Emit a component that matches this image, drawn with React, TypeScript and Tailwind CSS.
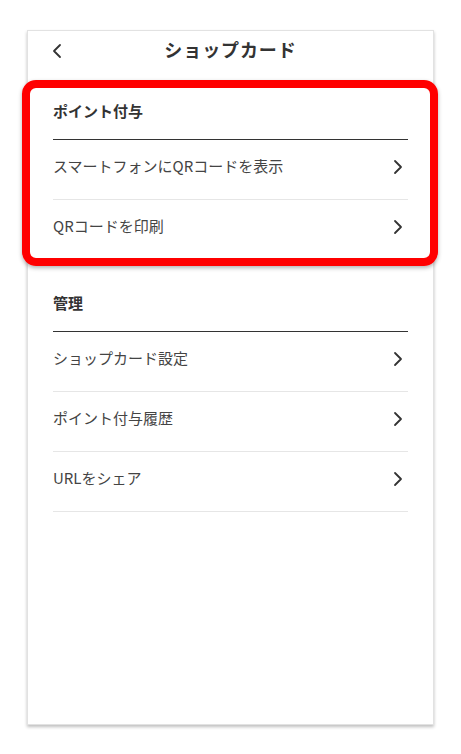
const Chevron = ({ dir = "right" }: { dir?: "left" | "right" }) => (
  <svg width="10" height="16" viewBox="0 0 10 16" fill="none">
    <polyline
      points={dir === "right" ? "2,2 8,8 2,14" : "8,2 2,8 8,14"}
      stroke="#333"
      strokeWidth="1.8"
      strokeLinecap="round"
      strokeLinejoin="round"
    />
  </svg>
)

const Row = ({ label }: { label: string }) => (
  <div className="flex h-[60px] items-center justify-between border-b border-[#e6e6e6] pb-[7px] pr-[5px]">
    <span className="text-[15px] leading-5 text-[#444]">{label}</span>
    <span className="pt-[1px]">
      <Chevron />
    </span>
  </div>
)

const Section = ({
  title,
  items,
  className,
}: {
  title: string
  items: string[]
  className?: string
}) => (
  <div className={className}>
    <h2 className="border-b border-[#333] pb-[18px] text-[15px] font-bold leading-5 text-[#333]">
      {title}
    </h2>
    {items.map((item) => (
      <Row key={item} label={item} />
    ))}
  </div>
)

export default function App() {
  return (
    <div
      className="min-h-[754px] bg-white pt-[30px]"
      style={{ fontFamily: '"Noto Sans CJK JP", "Noto Sans", sans-serif' }}
    >
      <div className="relative mx-auto h-[695px] w-[407px] border border-[#e2e2e2] bg-white shadow-[0_2px_3px_rgba(0,0,0,0.25)]">
        <header className="relative flex h-[40px] items-center justify-center pb-[4px]">
          <button className="absolute left-[24px] top-[12px]">
            <Chevron dir="left" />
          </button>
          <h1 className="text-[18px] font-bold tracking-[0.05em] text-[#333]">
            ショップカード
          </h1>
        </header>

        <div className="px-[25px]">
          <Section
            className="pt-[30px]"
            title="ポイント付与"
            items={["スマートフォンにQRコードを表示", "QRコードを印刷"]}
          />
          <Section
            className="pt-[33px]"
            title="管理"
            items={["ショップカード設定", "ポイント付与履歴", "URLをシェア"]}
          />
        </div>

        {/* highlight */}
        <div className="pointer-events-none absolute left-[-6px] top-[49px] h-[186px] w-[416px] rounded-[14px] border-[8px] border-[#ff0000] shadow-[0_2px_4px_rgba(0,0,0,0.3)]" />
      </div>
    </div>
  )
}
